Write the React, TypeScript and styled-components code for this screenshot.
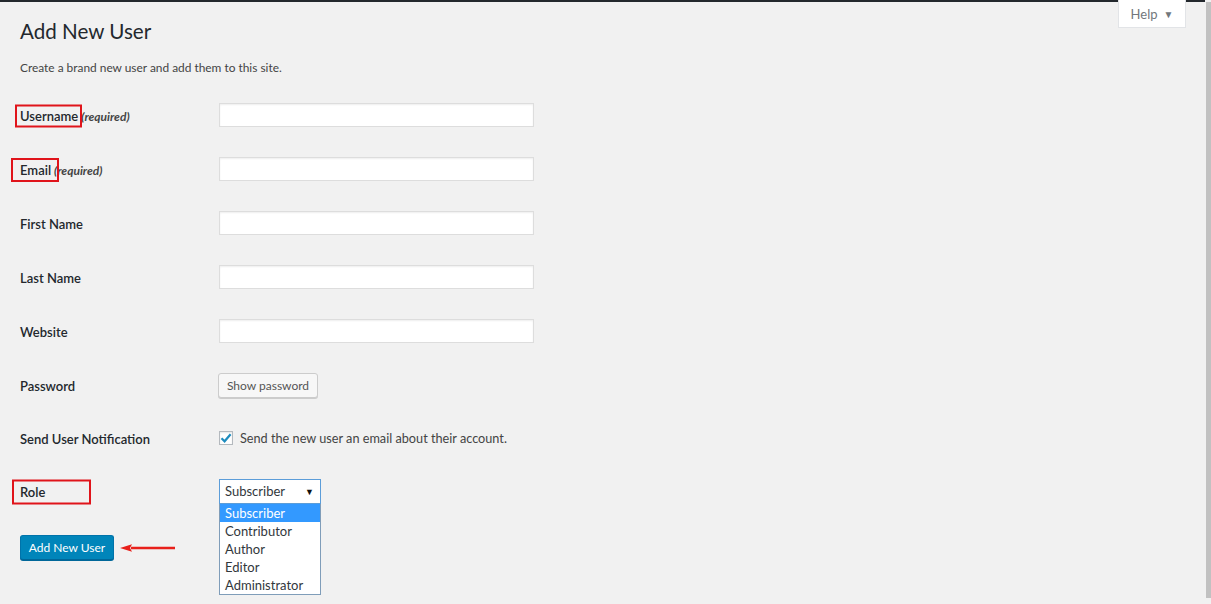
import React from 'react';
import styled, { createGlobalStyle } from 'styled-components';

const GlobalStyle = createGlobalStyle`
  html, body {
    margin: 0;
    padding: 0;
    background: #f1f1f1;
    font-family: Lato, "Open Sans", sans-serif;
    color: #23282d;
  }
  * { box-sizing: border-box; }
`;

const ROLES = ['Subscriber', 'Contributor', 'Author', 'Editor', 'Administrator'];

const FIELDS = [
  { label: 'Username', required: true, mark: { left: -5, width: 67, height: 23 } },
  { label: 'Email', required: true, mark: { left: -9, width: 48, height: 24 } },
  { label: 'First Name' },
  { label: 'Last Name' },
  { label: 'Website' },
];

export default function App() {
  return (
    <Screen>
      <GlobalStyle />
      <AdminBarEdge />
      <Body>
        <Wrap>
          <HelpTab>
            Help <Caret>▼</Caret>
          </HelpTab>
          <Title>Add New User</Title>
          <Intro>Create a brand new user and add them to this site.</Intro>

          <Form>
            {FIELDS.map((f) => (
              <Row key={f.label} $height={54}>
                <LabelCell>
                  <Label>
                    {f.label}
                    {f.mark && <Mark $left={f.mark.left} $width={f.mark.width} $height={f.mark.height} />}
                  </Label>
                  {f.required && <Required>(required)</Required>}
                </LabelCell>
                <TextInput type='text' />
              </Row>
            ))}

            <Row $height={54}>
              <LabelCell>
                <Label>Password</Label>
              </LabelCell>
              <SecondaryButton type='button'>Show password</SecondaryButton>
            </Row>

            <Row $height={51}>
              <LabelCell>
                <Label>Send User Notification</Label>
              </LabelCell>
              <CheckLine>
                <CheckBox>
                  <svg width='12' height='12' viewBox='0 0 12 12'>
                    <path d='M1.5 6.2 L4.6 9.3 L10.6 2.2' fill='none' stroke='#1e8cbe' strokeWidth='2.2' />
                  </svg>
                </CheckBox>
                Send the new user an email about their account.
              </CheckLine>
            </Row>

            <Row $height={56}>
              <LabelCell>
                <Label>
                  Role
                  <Mark $left={-8} $width={79} $height={25} />
                </Label>
              </LabelCell>
              <SelectWrap>
                <SelectBox>
                  Subscriber
                  <SelectCaret>▼</SelectCaret>
                </SelectBox>
                <OptionList>
                  {ROLES.map((r, i) => (
                    <OptionItem key={r} $active={i === 0}>
                      {r}
                    </OptionItem>
                  ))}
                </OptionList>
              </SelectWrap>
            </Row>

            <Submit>
              <PrimaryButton type='button'>Add New User</PrimaryButton>
              <svg width='56' height='10' viewBox='0 0 56 10'>
                <path d='M12 5 L56 5' stroke='#e8201b' strokeWidth='2.4' />
                <path d='M1 5 L13 1.2 L11 5 L13 8.8 Z' fill='#e8201b' />
              </svg>
            </Submit>
          </Form>
        </Wrap>
        <ScrollEdge />
      </Body>
    </Screen>
  );
}

const Screen = styled.div`
  width: 1211px;
  height: 604px;
  overflow: hidden;
  display: flex;
  flex-direction: column;
`;

const AdminBarEdge = styled.div`
  height: 2px;
  background: #23282d;
  margin-right: 6px;
`;

const Body = styled.div`
  flex: 1;
  display: flex;
`;

const Wrap = styled.div`
  position: relative;
  flex: 1;
  padding: 15px 0 0 20px;
`;

const ScrollEdge = styled.div`
  width: 5px;
  margin-left: 1px;
  height: 596px;
  background: #c1c1c1;
`;

const HelpTab = styled.div`
  position: absolute;
  top: -2px;
  right: 19px;
  width: 68px;
  height: 28px;
  display: flex;
  align-items: center;
  justify-content: center;
  gap: 6px;
  background: #fff;
  border: 1px solid #e2e4e7;
  border-top: none;
  color: #72777c;
  font-size: 13px;
  padding-top: 1px;
`;

const Caret = styled.span`
  font-size: 10px;
  color: #72777c;
`;

const Title = styled.h1`
  margin: 0;
  font-size: 20.6px;
  line-height: 29px;
  font-weight: 400;
  color: #23282d;
`;

const Intro = styled.p`
  margin: 13px 0 0;
  font-size: 11.9px;
  line-height: 18px;
  color: #444;
`;

const Form = styled.div`
  margin-top: 11px;
  display: flex;
  flex-direction: column;
`;

const Row = styled.div<{ $height: number }>`
  height: ${(p) => p.$height}px;
  display: grid;
  grid-template-columns: 199px 1fr;
  align-items: center;
`;

const LabelCell = styled.div`
  display: flex;
  align-items: baseline;
  padding-top: 2px;
  white-space: nowrap;
`;

const Label = styled.span`
  position: relative;
  font-size: 13px;
  font-weight: 600;
  color: #23282d;
`;

const Mark = styled.span<{ $left: number; $width: number; $height: number }>`
  position: absolute;
  left: ${(p) => p.$left}px;
  top: 50%;
  width: ${(p) => p.$width}px;
  height: ${(p) => p.$height}px;
  transform: translateY(-50%);
  border: 2px solid #e0141b;
  pointer-events: none;
`;

const Required = styled.span`
  margin-left: 3px;
  font-size: 12px;
  font-style: italic;
  font-weight: 700;
  color: #444;
`;

const TextInput = styled.input`
  width: 315px;
  height: 24px;
  margin: 0;
  border: 1px solid #ddd;
  background: #fff;
  box-shadow: inset 0 1px 2px rgba(0, 0, 0, 0.07);
  outline: none;
`;

const SecondaryButton = styled.button`
  justify-self: start;
  margin-left: -1px;
  width: 100px;
  height: 25px;
  padding: 0;
  border: 1px solid #ccc;
  border-radius: 3px;
  background: #f7f7f7;
  box-shadow: 0 1px 0 #ccc;
  color: #555;
  font-family: inherit;
  font-size: 12px;
`;

const CheckLine = styled.label`
  display: flex;
  align-items: center;
  gap: 7px;
  font-size: 12.7px;
  color: #444;
`;

const CheckBox = styled.span`
  width: 14px;
  height: 14px;
  display: flex;
  align-items: center;
  justify-content: center;
  background: #fff;
  border: 1px solid #b4b9be;
  box-shadow: inset 0 1px 2px rgba(0, 0, 0, 0.1);
`;

const SelectWrap = styled.div`
  position: relative;
  width: 102px;
`;

const SelectBox = styled.div`
  height: 25px;
  display: flex;
  align-items: center;
  justify-content: space-between;
  padding: 0 6px 0 5px;
  background: #fff;
  border: 1px solid #5b9dd9;
  font-size: 13px;
  color: #32373c;
`;

const SelectCaret = styled.span`
  font-size: 9px;
  color: #111;
`;

const OptionList = styled.ul`
  position: absolute;
  top: 25px;
  left: 0;
  width: 102px;
  margin: 0;
  padding: 0;
  list-style: none;
  background: #fff;
  border: 1px solid #7f9db9;
  border-top: none;
  z-index: 2;
`;

const OptionItem = styled.li<{ $active?: boolean }>`
  height: 18px;
  line-height: 18px;
  padding-left: 5px;
  font-size: 13px;
  color: ${(p) => (p.$active ? '#fff' : '#32373c')};
  background: ${(p) => (p.$active ? '#3399ff' : 'transparent')};
`;

const Submit = styled.div`
  display: flex;
  align-items: center;
  gap: 5px;
  padding-top: 16px;
`;

const PrimaryButton = styled.button`
  width: 94px;
  height: 25px;
  padding: 0;
  border: 1px solid #0073aa;
  border-bottom-color: #006799;
  border-radius: 3px;
  background: #0085ba;
  box-shadow: 0 1px 0 #006799;
  color: #fff;
  font-family: inherit;
  font-size: 12px;
`;
